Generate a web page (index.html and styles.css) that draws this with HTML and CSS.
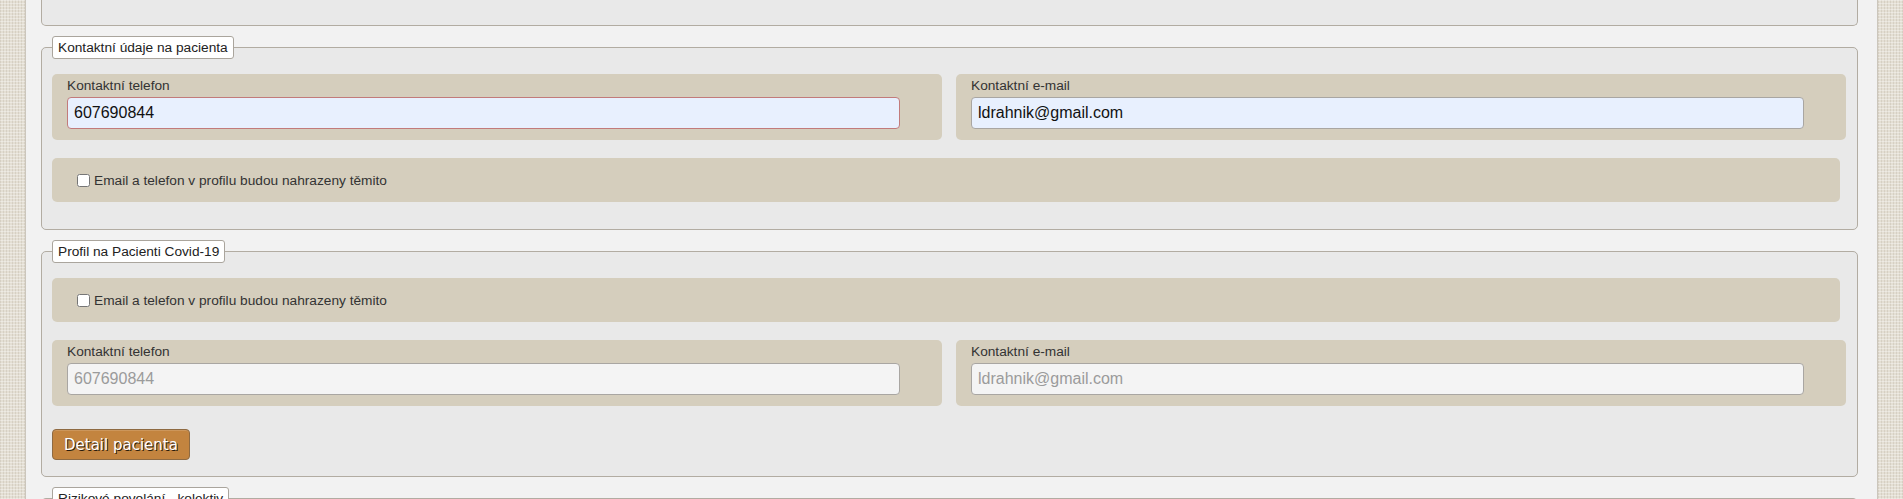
FILE: index.html
```html
<!DOCTYPE html>
<html lang="cs">
<head>
<meta charset="utf-8">
<title>Kontaktní údaje</title>
<link rel="stylesheet" href="styles.css">
</head>
<body>
<div class="page">
  <div class="section-tail"></div>

  <fieldset class="section">
    <legend class="section-title">Kontaktní údaje na pacienta</legend>
    <div class="field-grid">
      <div class="field">
        <label class="field-label">Kontaktní telefon</label>
        <input class="field-input autofill invalid" type="text" value="607690844">
      </div>
      <div class="field">
        <label class="field-label">Kontaktní e-mail</label>
        <input class="field-input autofill" type="text" value="ldrahnik@gmail.com">
      </div>
    </div>
    <div class="check-row gap-top">
      <label class="check-label"><input class="check" type="checkbox">Email a telefon v profilu budou nahrazeny těmito</label>
    </div>
  </fieldset>

  <fieldset class="section section-2">
    <legend class="section-title">Profil na Pacienti Covid-19</legend>
    <div class="check-row">
      <label class="check-label"><input class="check" type="checkbox">Email a telefon v profilu budou nahrazeny těmito</label>
    </div>
    <div class="field-grid gap-top">
      <div class="field">
        <label class="field-label">Kontaktní telefon</label>
        <input class="field-input disabled" type="text" value="607690844" disabled>
      </div>
      <div class="field">
        <label class="field-label">Kontaktní e-mail</label>
        <input class="field-input disabled" type="text" value="ldrahnik@gmail.com" disabled>
      </div>
    </div>
    <button class="btn-detail" type="button">Detail pacienta</button>
  </fieldset>

  <fieldset class="section section-3">
    <legend class="section-title">Rizikové povolání - kolektiv</legend>
    <div class="section-body"></div>
  </fieldset>
</div>
</body>
</html>
```

FILE: styles.css
```css
html, body {
  margin: 0;
  padding: 0;
}

body {
  height: 499px;
  overflow: hidden;
  font-family: "Liberation Sans", Arial, sans-serif;
  color: #333;
  background-color: #e4dfd4;
  background-image:
    repeating-linear-gradient(0deg, rgba(255, 255, 255, 0.35) 0 1px, transparent 1px 3px),
    repeating-linear-gradient(90deg, rgba(120, 105, 80, 0.13) 0 1px, transparent 1px 3px);
}

.page {
  margin: 0 25px;
  min-height: 499px;
  background: #f2f2f2;
  border-left: 1px solid #cbc6bc;
  border-right: 1px solid #cbc6bc;
  padding: 0 19px 0 15px;
  overflow: hidden;
}

.section-tail {
  height: 25px;
  background: #e9e9e9;
  border: 1px solid #b2aca2;
  border-top: none;
  border-radius: 0 0 5px 5px;
}

.section {
  margin: 10px 0 0;
  padding: 15px 10px 27px;
  min-width: 0;
  background: #e9e9e9;
  border: 1px solid #b2aca2;
  border-radius: 5px;
}

.section-2 {
  padding-bottom: 16px;
}

.section-title {
  padding: 3px 5px;
  font-size: 13.7px;
  line-height: 15px;
  color: #222;
  background: #fff;
  border: 1px solid #aaa59d;
  border-radius: 3px;
}

.field-grid {
  display: grid;
  grid-template-columns: 890px 890px;
  column-gap: 14px;
}

.field {
  background: #d5cebd;
  border-radius: 5px;
  padding: 4px 42px 11px 15px;
}

.field-label {
  display: block;
  font-size: 13.7px;
  line-height: 16px;
  color: #333;
  margin-bottom: 3px;
}

.field-input {
  display: block;
  box-sizing: border-box;
  width: 100%;
  height: 32px;
  margin: 0;
  padding: 0 6px;
  font-family: "Liberation Sans", Arial, sans-serif;
  font-size: 16px;
  color: #111;
  border: 1px solid #a9a6a2;
  border-radius: 4px;
  outline: none;
}

.autofill {
  background: #e8f0fe;
}

.invalid {
  border-color: #c27b7b;
}

.disabled {
  background: #f4f4f4;
  color: #9b9b9b;
  -webkit-text-fill-color: #9b9b9b;
  opacity: 1;
}

.check-row {
  display: flex;
  align-items: center;
  height: 44px;
  margin-right: 7px;
  padding-left: 25px;
  background: #d5cebd;
  border-radius: 5px;
}

.gap-top {
  margin-top: 18px;
}

.check-label {
  display: flex;
  align-items: center;
  font-size: 13.7px;
  color: #333;
}

.check {
  width: 13px;
  height: 13px;
  margin: 0 4px 0 0;
}

.btn-detail {
  display: block;
  margin-top: 23px;
  height: 31px;
  padding: 0 11px;
  font-family: "DejaVu Sans", Verdana, sans-serif;
  font-size: 15px;
  color: #fff;
  text-shadow: 1px 1px 0 #2b1b0c;
  background: #c3843f;
  border: 1px solid #8e6a42;
  border-radius: 4px;
  box-shadow: inset 0 1px 0 rgba(255, 255, 255, 0.15);
}

.section-3 {
  padding-bottom: 40px;
}

.section-body {
  height: 40px;
}
```
